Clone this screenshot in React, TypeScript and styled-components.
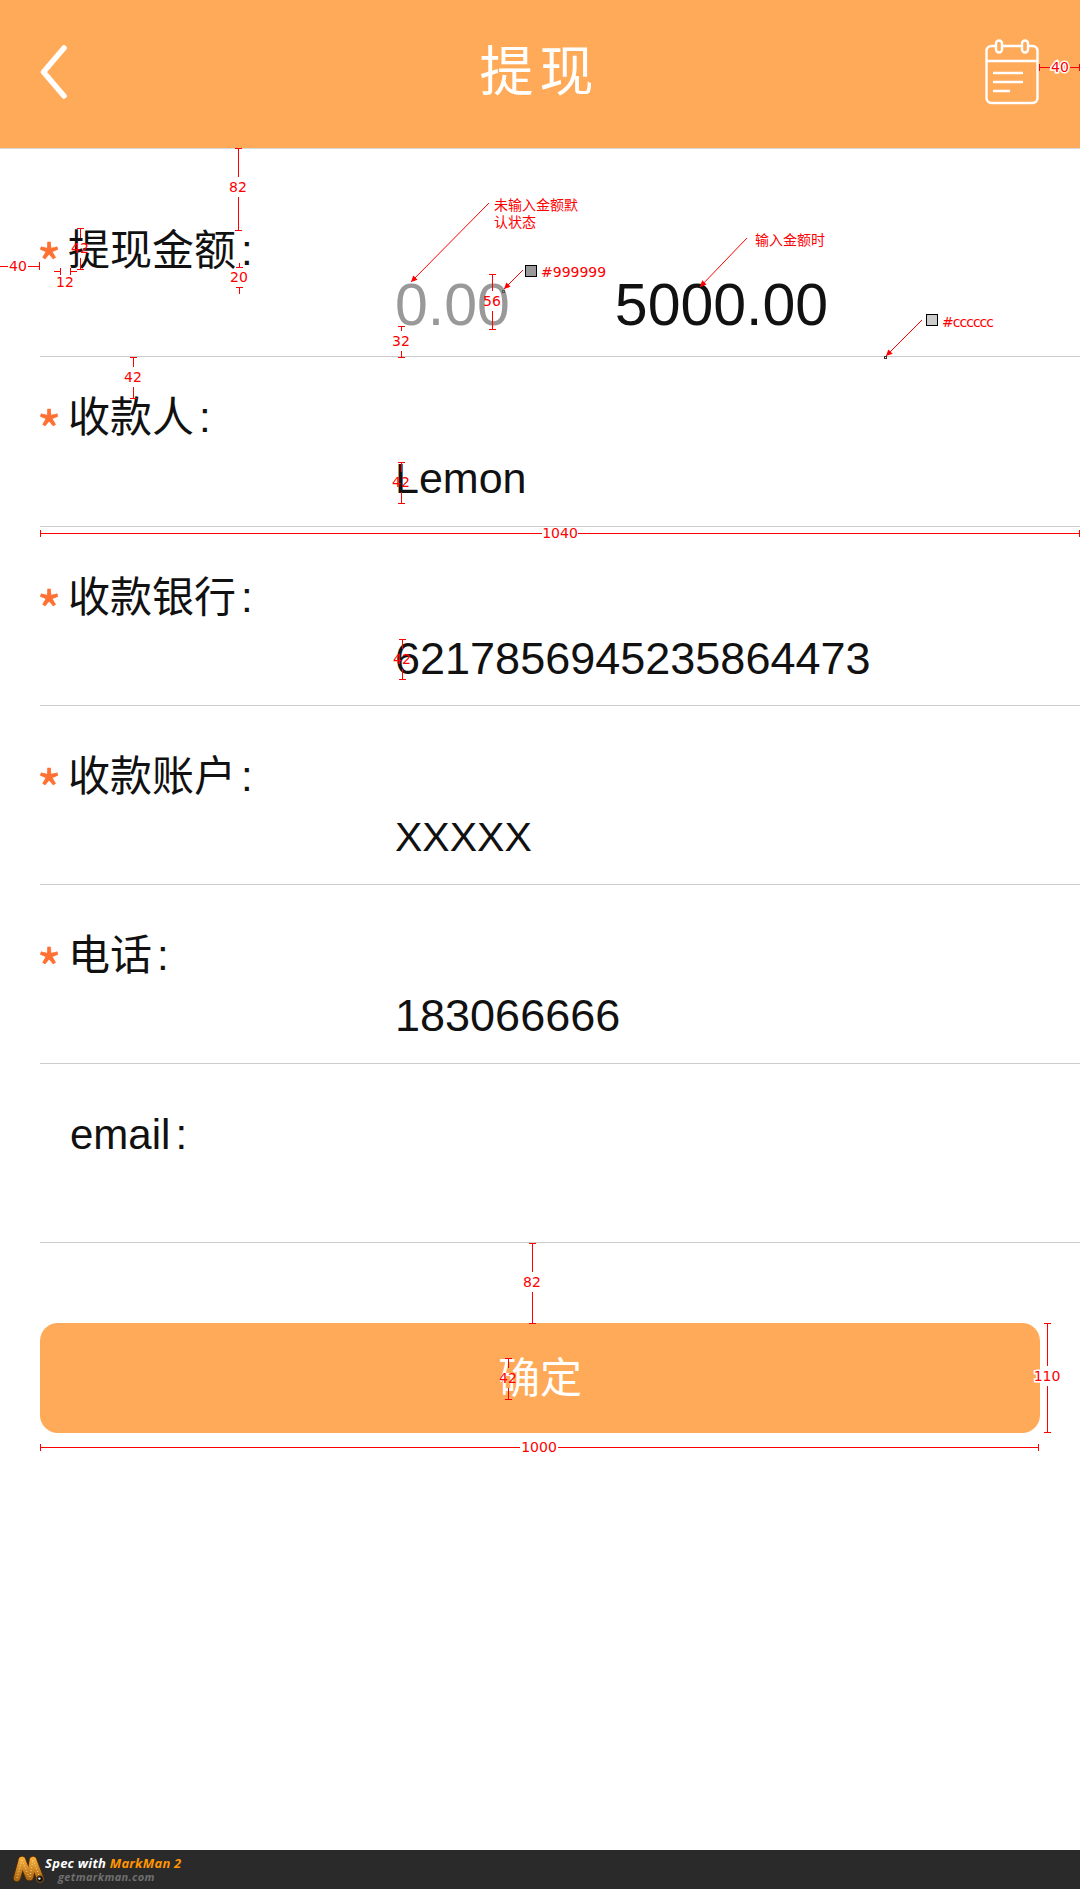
import styled, { createGlobalStyle } from "styled-components";

const ORANGE = "#ffaa58";
const RED = "#ff0000";

const GlobalStyle = createGlobalStyle`
  html, body {
    margin: 0;
    padding: 0;
    background: #fff;
  }
`;

const Page = styled.div`
  position: relative;
  display: flex;
  flex-direction: column;
  width: 1080px;
  height: 1889px;
  overflow: hidden;
  background: #fff;
  font-family: "Liberation Sans", "Noto Sans CJK SC", sans-serif;
  color: #111;
`;

// 顶部导航
const Header = styled.header`
  display: grid;
  grid-template-columns: 1fr auto 1fr;
  align-items: center;
  box-sizing: border-box;
  height: 149px;
  padding: 0 41px 4px 40px;
  background: ${ORANGE};
  border-bottom: 1px solid #d8d8d8;
`;

const Title = styled.h1`
  margin: 0 0 9px;
  font-family: "Noto Sans CJK SC", sans-serif;
  font-size: 54px;
  font-weight: 400;
  letter-spacing: 6px;
  color: #fff;
`;

const HeaderRight = styled.div`
  display: flex;
  justify-content: flex-end;
`;

const Form = styled.div`
  display: flex;
  flex-direction: column;
  padding-left: 40px;
`;

const Row = styled.div<{ $top: number; $height: number }>`
  display: flex;
  flex-direction: column;
  box-sizing: border-box;
  height: ${(p) => p.$height}px;
  padding-top: ${(p) => p.$top}px;
  border-bottom: 1px solid #ccc;
`;

const Label = styled.div`
  display: flex;
  align-items: flex-start;
  height: 40px;
  font-size: 42px;
  line-height: 40px;
`;

const Star = styled.span<{ $wide?: boolean }>`
  width: ${(p) => (p.$wide ? 33 : 31)}px;
  margin-left: -3px;
  padding-top: 10px;
  font-family: "Noto Sans CJK SC", sans-serif;
  font-size: 52px;
  line-height: 40px;
  color: #ff7033;
  -webkit-text-stroke: 0.6px #ff7033;
`;

const Colon = styled.span`
  margin-left: 5px;
  font-family: "Liberation Sans", sans-serif;
`;

const Values = styled.div<{ $bottom: number }>`
  display: flex;
  align-items: baseline;
  gap: 105px;
  margin-top: auto;
  padding: 0 0 ${(p) => p.$bottom}px 355px;
`;

const Value = styled.span<{ $size: number; $muted?: boolean }>`
  font-size: ${(p) => p.$size}px;
  line-height: 1;
  color: ${(p) => (p.$muted ? "#999999" : "#111")};
`;

const Submit = styled.button`
  display: block;
  width: 1000px;
  height: 110px;
  margin: 80px 0 0 40px;
  padding: 0 0 8px;
  border: 0;
  border-radius: 18px;
  background: ${ORANGE};
  color: #fff;
  font-family: "Noto Sans CJK SC", sans-serif;
  font-size: 42px;
`;

// MarkMan 底栏
const Footer = styled.footer`
  display: flex;
  align-items: center;
  box-sizing: border-box;
  height: 39px;
  margin-top: auto;
  padding-left: 11px;
  background: #2a2a2a;
`;

const FooterText = styled.div`
  display: flex;
  flex-direction: column;
  font-family: "Open Sans", sans-serif;
  font-style: italic;
  font-weight: 700;
`;

const FooterSpec = styled.span`
  font-size: 13px;
  line-height: 15px;
  letter-spacing: 0.25px;
  color: #fff;
`;

const FooterBrand = styled.span`
  color: #ff9500;
`;

const FooterLink = styled.span`
  padding-left: 13px;
  font-size: 11px;
  line-height: 12px;
  letter-spacing: 0.35px;
  color: #6f6f6f;
`;

// 标注层
const SpecLayer = styled.svg`
  position: absolute;
  left: 0;
  top: 0;
  pointer-events: none;

  text {
    font-family: "DejaVu Sans", "Noto Sans CJK SC", sans-serif;
    font-size: 14px;
    fill: ${RED};
    stroke: none;
  }

  text.halo {
    stroke: #fff;
    stroke-width: 3px;
    paint-order: stroke;
  }
`;

type VDimProps = { x: number; y1: number; y2: number; at: number; text: string; halo?: boolean };

function VDim({ x, y1, y2, at, text, halo }: VDimProps) {
  return (
    <g>
      <g stroke={RED} strokeWidth="1" shapeRendering="crispEdges">
        <line x1={x} x2={x} y1={y1} y2={at - 10} />
        <line x1={x} x2={x} y1={at + 10} y2={y2} />
        <line x1={x - 3} x2={x + 4} y1={y1} y2={y1} />
        <line x1={x - 3} x2={x + 4} y1={y2} y2={y2} />
      </g>
      <text className={halo ? "halo" : undefined} x={x} y={at + 5} textAnchor="middle">
        {text}
      </text>
    </g>
  );
}

type HDimProps = { y: number; x1: number; x2: number; at: number; half: number; text: string; halo?: boolean };

function HDim({ y, x1, x2, at, half, text, halo }: HDimProps) {
  return (
    <g>
      <g stroke={RED} strokeWidth="1" shapeRendering="crispEdges">
        <line x1={x1} x2={at - half} y1={y} y2={y} />
        <line x1={at + half} x2={x2} y1={y} y2={y} />
        <line x1={x1} x2={x1} y1={y - 3} y2={y + 4} />
        <line x1={x2} x2={x2} y1={y - 3} y2={y + 4} />
      </g>
      <text className={halo ? "halo" : undefined} x={at} y={y + 5} textAnchor="middle">
        {text}
      </text>
    </g>
  );
}

function Arrow({ x1, y1, x2, y2 }: { x1: number; y1: number; x2: number; y2: number }) {
  const a = Math.atan2(y2 - y1, x2 - x1);
  const len = 7;
  const p1 = `${x2 - len * Math.cos(a - 0.45)},${y2 - len * Math.sin(a - 0.45)}`;
  const p2 = `${x2 - len * Math.cos(a + 0.45)},${y2 - len * Math.sin(a + 0.45)}`;
  return (
    <g>
      <line x1={x1} y1={y1} x2={x2} y2={y2} stroke={RED} strokeWidth="1" />
      <polygon points={`${x2},${y2} ${p1} ${p2}`} fill={RED} />
    </g>
  );
}

function SpecDrawing() {
  return (
    <SpecLayer width="1080" height="1889" viewBox="0 0 1080 1889" fill="none">
      <VDim x={238} y1={148} y2={230} at={187} text="82" />
      <g stroke={RED} shapeRendering="crispEdges">
        <line x1={239} x2={239} y1={263} y2={267} />
        <line x1={236} x2={243} y1={267} y2={267} />
        <line x1={239} x2={239} y1={287} y2={294} />
        <line x1={236} x2={243} y1={287} y2={287} />
        <line x1={54} x2={60} y1={271} y2={271} />
        <line x1={60} x2={60} y1={268} y2={275} />
        <line x1={70} x2={77} y1={271} y2={271} />
        <line x1={70} x2={70} y1={268} y2={275} />
        <line x1={0} x2={8} y1={266} y2={266} />
        <line x1={28} x2={39} y1={266} y2={266} />
        <line x1={39} x2={39} y1={262} y2={270} />
      </g>
      <text x={239} y={282} textAnchor="middle">20</text>
      <text x={65} y={287} textAnchor="middle">12</text>
      <text x={18} y={271} textAnchor="middle">40</text>

      <VDim x={80} y1={228} y2={269} at={248} text="42" />
      <VDim x={492} y1={274} y2={329} at={301} text="56" />
      <VDim x={401} y1={326} y2={357} at={341} text="32" />
      <VDim x={133} y1={357} y2={398} at={377} text="42" />
      <VDim x={401} y1={462} y2={503} at={482} text="42" />
      <VDim x={402} y1={639} y2={679} at={659} text="42" />
      <HDim y={533} x1={40} x2={1079} at={560} half={18} text="1040" />
      <VDim x={532} y1={1243} y2={1323} at={1282} text="82" />
      <VDim x={508} y1={1358} y2={1399} at={1378} text="42" />
      <VDim x={1047} y1={1323} y2={1432} at={1376} text="110" halo />
      <HDim y={1447} x1={40} x2={1038} at={539} half={19} text="1000" />
      <HDim y={67} x1={1039} x2={1079} at={1060} half={10} text="40" halo />

      <Arrow x1={489} y1={203} x2={411} y2={282} />
      <Arrow x1={747} y1={238} x2={700} y2={287} />
      <Arrow x1={523} y1={270} x2={504} y2={289} />
      <Arrow x1={922} y1={320} x2={886} y2={356} />
      <rect x="502.5" y="290.5" width="2" height="2" stroke="#555" />
      <rect x="884.5" y="356.5" width="2" height="2" stroke="#333" />

      <text x={494} y={210}>未输入金额默</text>
      <text x={494} y={227}>认状态</text>
      <text x={755} y={245}>输入金额时</text>

      <rect x="525.5" y="265.5" width="11" height="11" fill="#999999" stroke="#000" />
      <text x={541} y={277}>#999999</text>
      <rect x="926.5" y="314.5" width="11" height="11" fill="#cccccc" stroke="#000" />
      <text x={942} y={327} textLength={52}>#cccccc</text>
    </SpecLayer>
  );
}

function BackIcon() {
  return (
    <svg width="30" height="58" viewBox="0 0 30 58" fill="none">
      <path d="M24 5 3.5 29 24 53" stroke="#fff" strokeWidth="5.5" strokeLinecap="round" strokeLinejoin="round" />
    </svg>
  );
}

function NotesIcon() {
  return (
    <svg width="54" height="66" viewBox="0 0 54 66" fill="none" stroke="#fff" strokeWidth="2.4">
      <rect x="1.5" y="7" width="51" height="57" rx="5" />
      <path d="M1.5 22h51" />
      <rect x="11" y="1.5" width="6" height="12" rx="3" fill={ORANGE} />
      <rect x="37" y="1.5" width="6" height="12" rx="3" fill={ORANGE} />
      <path d="M8 34h30M8 43h30M8 52h17" />
    </svg>
  );
}

function MarkManLogo() {
  const legs = "M6 23 11 5M11 5l7 17M19 22l3-17M22 5l7 18";
  return (
    <svg width="34" height="30" viewBox="0 0 34 30" fill="none">
      <defs>
        <linearGradient id="mm" x1="0" y1="0" x2="0" y2="1">
          <stop offset="0" stopColor="#f3a93a" />
          <stop offset="1" stopColor="#b06a14" />
        </linearGradient>
      </defs>
      <path d={legs} stroke="#4d2c08" strokeWidth="8.5" strokeLinecap="round" />
      <path d={legs} stroke="url(#mm)" strokeWidth="6.5" strokeLinecap="round" />
      <path d={legs} stroke="#ffd98c" strokeWidth="1" strokeDasharray="1 2" />
      <circle cx="29" cy="24" r="3.5" fill="#111" stroke="#8a5a18" strokeWidth="1" />
      <circle cx="28.4" cy="23.6" r="1.2" fill="#eee" />
    </svg>
  );
}

type FieldRow = {
  label: string;
  required: boolean;
  top: number;
  height: number;
  bottom: number;
  values: { text: string; size: number; muted?: boolean }[];
};

const rows: FieldRow[] = [
  {
    label: "提现金额",
    required: true,
    top: 82,
    height: 208,
    bottom: 21,
    values: [
      { text: "0.00", size: 59, muted: true },
      { text: "5000.00", size: 59 },
    ],
  },
  { label: "收款人", required: true, top: 41, height: 170, bottom: 26, values: [{ text: "Lemon", size: 43 }] },
  { label: "收款银行", required: true, top: 51, height: 179, bottom: 24, values: [{ text: "6217856945235864473", size: 45 }] },
  { label: "收款账户", required: true, top: 51, height: 179, bottom: 26, values: [{ text: "XXXXX", size: 41 }] },
  { label: "电话", required: true, top: 51, height: 179, bottom: 25, values: [{ text: "183066666", size: 45 }] },
  { label: "email", required: false, top: 51, height: 179, bottom: 26, values: [] },
];

export default function App() {
  return (
    <Page>
      <GlobalStyle />
      <Header>
        <BackIcon />
        <Title>提现</Title>
        <HeaderRight>
          <NotesIcon />
        </HeaderRight>
      </Header>

      <Form>
        {rows.map((row) => (
          <Row key={row.label} $top={row.top} $height={row.height}>
            <Label>
              <Star $wide={!row.required}>{row.required ? "*" : ""}</Star>
              {row.label}
              <Colon>:</Colon>
            </Label>
            <Values $bottom={row.bottom}>
              {row.values.map((v) => (
                <Value key={v.text} $size={v.size} $muted={v.muted}>
                  {v.text}
                </Value>
              ))}
            </Values>
          </Row>
        ))}
      </Form>

      <Submit>确定</Submit>

      <Footer>
        <MarkManLogo />
        <FooterText>
          <FooterSpec>
            Spec with <FooterBrand>MarkMan 2</FooterBrand>
          </FooterSpec>
          <FooterLink>getmarkman.com</FooterLink>
        </FooterText>
      </Footer>

      <SpecDrawing />
    </Page>
  );
}
